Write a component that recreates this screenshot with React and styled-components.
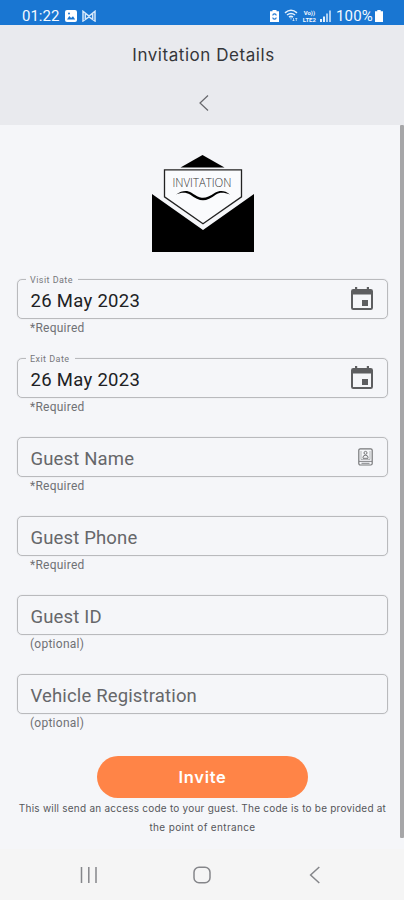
import React from "react";
import styled, { createGlobalStyle } from "styled-components";

const fields = [
  { label: "Visit Date", value: "26 May 2023", hint: "*Required", icon: "date" },
  { label: "Exit Date", value: "26 May 2023", hint: "*Required", icon: "date" },
  { placeholder: "Guest Name", hint: "*Required", icon: "contact" },
  { placeholder: "Guest Phone", hint: "*Required" },
  { placeholder: "Guest ID", hint: "(optional)" },
  { placeholder: "Vehicle Registration", hint: "(optional)" },
];

export default function App() {
  return (
    <>
      <GlobalStyle />
      <Screen>
        <StatusBar>
          <StatusGroup>
            <Clock>01:22</Clock>
            <PictureIcon />
            <MailIcon />
          </StatusGroup>
          <StatusGroup>
            <SaverIcon />
            <WifiIcon />
            <Volte>
              <span>Vo))</span>
              <span>LTE2</span>
            </Volte>
            <SignalIcon />
            <Percent>100%</Percent>
            <BatteryIcon />
          </StatusGroup>
        </StatusBar>

        <Header>
          <h1>Invitation Details</h1>
          <BackButton aria-label="Back">
            <svg width="12" height="18" viewBox="0 0 12 18">
              <path d="M10 1.5 2 9l8 7.5" />
            </svg>
          </BackButton>
        </Header>

        <Content>
          <Envelope />
          <Form>
            {fields.map((field) => (
              <Field key={field.label || field.placeholder}>
                <Box>
                  {field.label && <Label>{field.label}</Label>}
                  <Value $filled={Boolean(field.value)}>
                    {field.value || field.placeholder}
                  </Value>
                  {field.icon === "date" && <CalendarIcon />}
                  {field.icon === "contact" && <ContactIcon />}
                </Box>
                <Hint>{field.hint}</Hint>
              </Field>
            ))}
          </Form>
          <InviteButton>Invite</InviteButton>
          <Note>
            <NoteLine $spacing="0.23px">
              This will send an access code to your guest. The code is to be
              provided at
            </NoteLine>
            <NoteLine $spacing="0.35px">the point of entrance</NoteLine>
          </Note>
          <Scrollbar />
        </Content>

        <NavBar>
          <svg width="18" height="18" viewBox="0 0 18 18">
            <path d="M1.5 1v16M8.8 1v16M16 1v16" />
          </svg>
          <svg width="18" height="18" viewBox="0 0 18 18">
            <rect x="1" y="1.2" width="16" height="15.6" rx="5" />
          </svg>
          <svg width="18" height="18" viewBox="0 0 18 18">
            <path d="M13.3 1 4.6 9l8.7 8" />
          </svg>
        </NavBar>
      </Screen>
    </>
  );
}

function PictureIcon() {
  return (
    <svg width="12" height="12" viewBox="0 0 12 12">
      <rect width="12" height="12" rx="2" fill="#fff" />
      <path d="M2 9.5 4.3 6l1.8 2L8 6.3l2.2 3.2z" fill="#1976d2" />
      <circle cx="4" cy="3.4" r="1" fill="#1976d2" />
    </svg>
  );
}

function MailIcon() {
  return (
    <svg width="14" height="12" viewBox="0 0 14 12" fill="none" stroke="#d5e7fa">
      <path
        d="M1 11V1.3L7 6l6-4.700V11L7 6.800z M3.300 3v7M10.700 3v7"
        strokeWidth="1.500"
      />
    </svg>
  );
}

function SaverIcon() {
  return (
    <svg width="9" height="12" viewBox="0 0 9 12">
      <path d="M2.5 0h4v1.2H9V12H0V1.2h2.5z" fill="#fff" />
      <path
        d="M2.8 5.600a1.700 1.700 0 0 1 3.400 0M6.200 7.400a1.700 1.700 0 0 1-3.400 0"
        fill="none"
        stroke="#1976d2"
        strokeWidth="1.1"
      />
    </svg>
  );
}

function WifiIcon() {
  return (
    <svg width="15" height="13" viewBox="0 0 15 13" fill="none" stroke="#e4f0fc">
      <path
        d="M1 3.800q6-5 12 0M3 6q4-3.200 8 0M5 8.100q2-1.600 4 0"
        strokeWidth="1.500"
      />
      <path
        d="M7 8v2.500M9.500 9v3M8.500 11l1 1 1-1M12.300 12V9M11.300 10l1-1 1 1"
        strokeWidth=".7"
      />
    </svg>
  );
}

function SignalIcon() {
  return (
    <svg width="11" height="12" viewBox="0 0 11 12">
      <path d="M0 9h2v3H0zM3 6.5h2V12H3z" fill="#e4f0fc" />
      <path d="M6 3.5h2V12H6zM9 .5h2V12H9z" fill="#a9cdf2" />
    </svg>
  );
}

function BatteryIcon() {
  return (
    <svg width="8" height="12" viewBox="0 0 8 12">
      <path d="M2.300 0h3.400v1.200H8V12H0V1.200h2.300z" fill="#fff" />
    </svg>
  );
}

function CalendarIcon() {
  return (
    <svg width="22" height="24" viewBox="0 0 22 24" fill="#5d5e60">
      <path d="M4 0h2.2v2h9.6V0H18v2h1.7Q22 2 22 4.3v16.4q0 2.3-2.3 2.3H2.3Q0 23 0 20.7V4.3Q0 2 2.3 2H4zM2 7.5v13.5h18V7.5z" />
      <path d="M11 13h6v6h-6z" />
    </svg>
  );
}

function ContactIcon() {
  return (
    <svg
      width="15"
      height="18"
      viewBox="0 0 15 18"
      fill="none"
      stroke="#77787a"
    >
      <rect x=".8" y=".8" width="13.4" height="16.2" rx="1.5" strokeWidth="1.2" />
      <path d="M1 13.400h13M3.500 15.300h8" strokeWidth=".9" />
      <path d="M3 3v8.500h9V3" strokeWidth=".5" />
      <circle cx="7.5" cy="4.9" r="1.5" />
      <path d="M5 10.300V9.300q0-2 2.500-2t2.500 2v1z" />
    </svg>
  );
}

function Envelope() {
  return (
    <EnvelopeSvg width="102" height="97" viewBox="0 0 102 97">
      <path d="M50.500 0 72.500 12.500H28.500z" />
      <path d="M0 39 51 75 102 39v58H0z" />
      <path
        d="M12.500 14.800h77v27L51 68.800 12.500 41.800z"
        fill="#fafbfd"
        stroke="#222"
        strokeWidth="1.300"
      />
      <path d="M24 39.500C30 35.500 35 35 39.500 37.800C46 42 47.500 42.800 51 42.800S58 41 63 37.800C68 35 73 35.500 78 39.500C72 37 67.500 37 64 39.500C59 43.300 55 45.300 51 45.300S43 43.300 38 39.500C34 37 29.500 37 24 39.500z" />
      <text x="20.5" y="32" textLength="59" lengthAdjust="spacingAndGlyphs">
        INVITATION
      </text>
    </EnvelopeSvg>
  );
}

const GlobalStyle = createGlobalStyle`
  * {
    box-sizing: border-box;
  }

  body {
    margin: 0;
    background: #f5f6f9;
  }
`;

const Screen = styled.div`
  width: 404px;
  height: 900px;
  display: flex;
  flex-direction: column;
  overflow: hidden;
  background: #f5f6f9;
  font-family: Roboto, "Liberation Sans", sans-serif;
`;

const StatusBar = styled.div`
  height: 25px;
  flex-shrink: 0;
  display: flex;
  justify-content: space-between;
  align-items: center;
  padding: 6px 21px 0 22px;
  background: #1976d2;
  color: #f4f9ff;
`;

const StatusGroup = styled.div`
  display: flex;
  align-items: center;
  gap: 5px;
`;

const Clock = styled.span`
  margin-right: 1px;
  font-size: 15px;
  line-height: 18px;
`;

const Percent = styled.span`
  margin-right: -3px;
  font-size: 15px;
  line-height: 18px;
  letter-spacing: 0.2px;
`;

const Volte = styled.div`
  display: flex;
  flex-direction: column;
  align-items: center;
  margin: 0 -1px;
  font-size: 6px;
  font-weight: 700;
  line-height: 7px;
`;

const Header = styled.header`
  height: 100px;
  flex-shrink: 0;
  display: flex;
  flex-direction: column;
  align-items: center;
  padding: 18px 0 0 3px;
  background: #e9eaee;

  h1 {
    margin: 0;
    color: #35363a;
    font-family: Inter, sans-serif;
    font-size: 17px;
    font-weight: 400;
    line-height: 24px;
    letter-spacing: 0.55px;
  }
`;

const BackButton = styled.button`
  display: flex;
  margin-top: 27px;
  padding: 0;
  border: none;
  background: none;

  path {
    fill: none;
    stroke: #66676b;
    stroke-width: 1.2;
  }
`;

const Content = styled.main`
  position: relative;
  height: 724px;
  flex-shrink: 0;
  display: flex;
  flex-direction: column;
  align-items: center;
  padding: 30px 16px 0 17px;
`;

const EnvelopeSvg = styled.svg`
  flex-shrink: 0;

  text {
    fill: #333;
    font-family: "Open Sans", sans-serif;
    font-size: 12px;
    font-weight: 300;
  }
`;

const Form = styled.div`
  width: 100%;
  display: flex;
  flex-direction: column;
  padding-top: 27px;
`;

const Field = styled.div`
  height: 79px;
`;

const Box = styled.div`
  position: relative;
  height: 40px;
  display: flex;
  justify-content: space-between;
  align-items: center;
  padding: 0 14px 0 12.5px;
  border: 1px solid #b9babd;
  border-radius: 5px;
  box-shadow: 0 0 1px #c4c5c8;
`;

/* sits on the top border and hides the line behind it */
const Label = styled.span`
  position: absolute;
  top: -6px;
  left: 8px;
  padding: 0 5px 0 4px;
  background: #f5f6f9;
  color: #77787c;
  font-size: 9px;
  line-height: 12px;
  letter-spacing: 0.45px;
`;

const Value = styled.span`
  padding-top: 3px;
  color: ${(props) => (props.$filled ? "#202124" : "#66676a")};
  font-size: 18.5px;
  line-height: 24px;
  letter-spacing: ${(props) => (props.$filled ? "0.3px" : "0.15px")};
`;

const Hint = styled.p`
  margin: 1px 0 0 13px;
  color: #707175;
  font-size: 12px;
  line-height: 16px;
  letter-spacing: 0.25px;
`;

const InviteButton = styled.button`
  width: 211px;
  height: 42px;
  flex-shrink: 0;
  margin-top: 3px;
  border: none;
  border-radius: 21px;
  background: #ff8447;
  color: #fff;
  font-family: Inter, sans-serif;
  font-size: 16.5px;
  font-weight: 600;
  letter-spacing: 0.7px;
`;

const Note = styled.p`
  display: flex;
  flex-direction: column;
  align-items: center;
  margin: 1px 0 0;
  color: #55565b;
  font-family: Inter, sans-serif;
  font-size: 10px;
  line-height: 19px;
`;

const NoteLine = styled.span`
  letter-spacing: ${(props) => props.$spacing};
  white-space: nowrap;
`;

const Scrollbar = styled.div`
  position: absolute;
  top: 0;
  right: 0;
  width: 4px;
  height: 713px;
  border-radius: 1px;
  background: #a6a6a8;
`;

const NavBar = styled.nav`
  flex: 1;
  display: flex;
  justify-content: center;
  align-items: center;
  gap: 95px;
  padding-top: 1px;
  background: #f5f5f5;

  svg {
    fill: none;
    stroke: #85868a;
    stroke-width: 1.5;
  }
`;
